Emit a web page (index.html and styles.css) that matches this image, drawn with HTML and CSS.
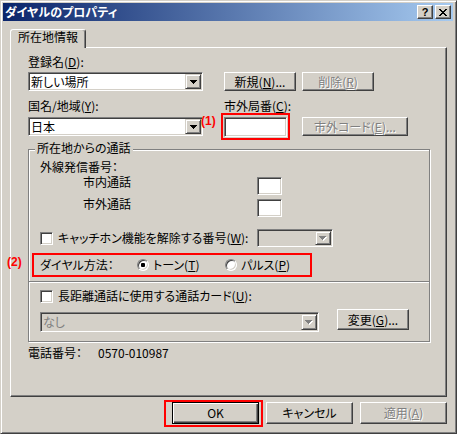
FILE: index.html
```html
<!DOCTYPE html>
<html lang="ja">
<head>
<meta charset="utf-8">
<title>ダイヤルのプロパティ</title>
<link rel="stylesheet" href="styles.css">
</head>
<body>
<div class="window">
  <div class="titlebar">
    <span class="title">ダイヤルのプロパティ</span>
    <span class="cap-btn help">?</span>
    <span class="cap-btn close"><svg width="8" height="7" viewBox="0 0 8 7" shape-rendering="crispEdges"><path d="M0 0h2v1h-2z M6 0h2v1h-2z M1 1h2v1h-2z M5 1h2v1h-2z M2 2h4v1h-4z M3 3h2v1h-2z M2 4h4v1h-4z M1 5h2v1h-2z M5 5h2v1h-2z M0 6h2v1h-2z M6 6h2v1h-2z" fill="#000"/></svg></span>
  </div>
  <div class="body">
    <div class="tabs"><div class="tab">所在地情報</div></div>
    <div class="panel">
      <div class="lbl">登録名(<u>D</u>):</div>
      <div class="row r1">
        <div class="combo w175"><span class="combo-text">新しい場所</span><span class="dd"><svg width="7" height="4" viewBox="0 0 7 4" shape-rendering="crispEdges"><path d="M0 0h7v1h-1v1h-1v1h-1v1h-1v-1h-1v-1h-1v-1h-1z" fill="#000"/></svg></span></div>
        <div class="btn w72 ml21">新規(<u>N</u>)...</div>
        <div class="btn w72 ml6 disabled">削除(<u>R</u>)</div>
      </div>
      <div class="row labels2">
        <div class="lbl w196">国名/地域(<u>Y</u>):</div>
        <div class="lbl">市外局番(<u>C</u>):</div>
      </div>
      <div class="row r2">
        <div class="combo w175"><span class="combo-text">日本</span><span class="dd"><svg width="7" height="4" viewBox="0 0 7 4" shape-rendering="crispEdges"><path d="M0 0h7v1h-1v1h-1v1h-1v1h-1v-1h-1v-1h-1v-1h-1z" fill="#000"/></svg></span></div>
        <div class="area-wrap"><span class="note n1">(1)</span><div class="edit area"></div></div>
        <div class="btn w106 ml15 disabled">市外コード(<u>E</u>)...</div>
      </div>
      <div class="group">
        <div class="group-title">所在地からの通話</div>
        <div class="group-sec sec1">
          <div class="lbl">外線発信番号：</div>
          <div class="row num-row first"><div class="num-lbl">市内通話</div><div class="edit small"></div></div>
          <div class="row num-row"><div class="num-lbl">市外通話</div><div class="edit small"></div></div>
          <div class="row chk-row">
            <span class="check"></span>
            <span class="chk-text">キャッチホン機能を解除する番号(<u>W</u>):</span>
            <div class="combo dis w76"><span class="combo-text"></span><span class="dd"><svg width="8" height="5" viewBox="0 0 8 5" shape-rendering="crispEdges"><path d="M1 1h7v1h-1v1h-1v1h-1v1h-1v-1h-1v-1h-1v-1h-1z" fill="#fff"/><path d="M0 0h7v1h-1v1h-1v1h-1v1h-1v-1h-1v-1h-1v-1h-1z" fill="#808080"/></svg></span></div>
          </div>
          <div class="dial-row">
            <span class="note n2">(2)</span>
            <span class="dial-lbl">ダイヤル方法：</span>
            <span class="radio-item w88"><span class="radio checked"></span>トーン(<u>T</u>)</span>
            <span class="radio-item"><span class="radio"></span>パルス(<u>P</u>)</span>
          </div>
        </div>
        <div class="sep"></div>
        <div class="group-sec sec2">
          <div class="row chk-row2">
            <span class="check"></span>
            <span class="chk-text2">長距離通話に使用する通話カード(<u>U</u>):</span>
          </div>
          <div class="row card-row">
            <div class="combo dis w279"><span class="combo-text">なし</span><span class="dd"><svg width="8" height="5" viewBox="0 0 8 5" shape-rendering="crispEdges"><path d="M1 1h7v1h-1v1h-1v1h-1v1h-1v-1h-1v-1h-1v-1h-1z" fill="#fff"/><path d="M0 0h7v1h-1v1h-1v1h-1v1h-1v-1h-1v-1h-1v-1h-1z" fill="#808080"/></svg></span></div>
            <div class="btn w72 ml18 h21">変更(<u>G</u>)...</div>
          </div>
        </div>
      </div>
      <div class="phone"><span class="phone-lbl">電話番号：</span><span>0570-010987</span></div>
    </div>
    <div class="dialog-buttons">
      <div class="btn dlg default ok">OK</div>
      <div class="btn dlg">キャンセル</div>
      <div class="btn dlg disabled">適用(<u>A</u>)</div>
    </div>
  </div>
</div>
</body>
</html>
```

FILE: styles.css
```css
* { box-sizing: border-box; }
html, body { margin: 0; padding: 0; }
body {
  width: 457px;
  height: 434px;
  overflow: hidden;
  background: #d4d0c8;
  font-family: "Noto Sans CJK JP", "Noto Sans", sans-serif;
  font-size: 12px;
  line-height: 14px;
  color: #000;
  font-feature-settings: "palt";
}
u { text-decoration: underline; text-underline-offset: 1px; }

.window {
  width: 457px;
  height: 434px;
  background: #d4d0c8;
  border: 1px solid;
  border-color: #d4d0c8 #404040 #404040 #d4d0c8;
  box-shadow: inset 1px 1px 0 #fff, inset -1px -1px 0 #808080;
  padding: 2px 3px 3px 2px;
  display: flex;
  flex-direction: column;
}

.titlebar {
  height: 18px;
  background: linear-gradient(to right, #0a246a, #a6caf0);
  display: flex;
  align-items: center;
  padding: 0 2px 0 2px;
}
.title {
  flex: 1;
  color: #fff;
  font-weight: 700;
  white-space: nowrap;
}
.cap-btn {
  width: 16px;
  height: 14px;
  background: #d4d0c8;
  border: 1px solid;
  border-color: #fff #404040 #404040 #fff;
  box-shadow: inset -1px -1px 0 #808080;
  display: flex;
  align-items: center;
  justify-content: center;
}
.cap-btn.help {
  margin-right: 2px;
  font-family: "Liberation Sans", sans-serif;
  font-weight: 700;
  font-size: 11px;
  line-height: 11px;
}

.body {
  padding: 8px 6px 0 7px;
  display: flex;
  flex-direction: column;
}
.tabs {
  display: flex;
  height: 19px;
  margin-bottom: -1px;
  position: relative;
  z-index: 1;
}
.tab {
  width: 76px;
  height: 19px;
  background: #d4d0c8;
  border: 1px solid;
  border-bottom: none;
  border-color: #fff #404040 transparent #fff;
  box-shadow: inset -1px 0 0 #808080;
  border-radius: 3px 3px 0 0;
  padding: 0 0 0 7px;
  white-space: nowrap;
}

.panel {
  height: 350px;
  border: 1px solid;
  border-color: #fff #404040 #404040 #fff;
  box-shadow: inset -1px -1px 0 #808080;
  padding: 7px 0 0 17px;
}

.lbl { white-space: nowrap; height: 14px; }
.row { display: flex; align-items: flex-start; }
.r1 { margin-top: 3px; }
.labels2 { margin-top: 8px; }
.r2 { margin-top: 4px; }

.w175 { width: 175px; }
.w196 { width: 196px; }
.w72 { width: 72px; }
.w76 { width: 76px; }
.w88 { width: 88px; }
.w106 { width: 106px; }
.w279 { width: 279px; }
.ml6 { margin-left: 6px; }
.ml15 { margin-left: 15px; }
.ml18 { margin-left: 18px; }
.ml21 { margin-left: 21px; }

.combo {
  height: 19px;
  display: flex;
  background: #fff;
  border: 1px solid;
  border-color: #808080 #fff #fff #808080;
  box-shadow: inset 1px 1px 0 #404040, inset -1px -1px 0 #d4d0c8;
  padding: 1px;
}
.combo.dis { background: #d4d0c8; color: #808080; height: 18px; }
.combo-text {
  flex: 1;
  padding-left: 1px;
  line-height: 15px;
  white-space: nowrap;
  overflow: hidden;
}
.dd {
  width: 16px;
  background: #d4d0c8;
  border: 1px solid;
  border-color: #d4d0c8 #404040 #404040 #d4d0c8;
  box-shadow: inset 1px 1px 0 #fff, inset -1px -1px 0 #808080;
  display: flex;
  align-items: center;
  justify-content: center;
}
.dd svg { display: block; }

.edit {
  background: #fff;
  border: 1px solid;
  border-color: #808080 #fff #fff #808080;
  box-shadow: inset 1px 1px 0 #404040, inset -1px -1px 0 #d4d0c8;
}

.btn {
  height: 19px;
  background: #d4d0c8;
  border: 1px solid;
  border-color: #fff #404040 #404040 #fff;
  box-shadow: inset -1px -1px 0 #808080;
  display: flex;
  align-items: center;
  justify-content: center;
  white-space: nowrap;
}
.btn.h21 { height: 21px; }
.disabled { color: #808080; text-shadow: 1px 1px 0 #fff; }

.area-wrap {
  position: relative;
  margin-left: 21px;
  width: 63px;
  height: 20px;
}
.edit.area { width: 63px; height: 20px; }
.area-wrap::after {
  content: "";
  position: absolute;
  left: -3px;
  right: -3px;
  top: -4px;
  bottom: -3px;
  border: 2px solid #f00;
}
.note {
  position: absolute;
  color: #f00;
  font-family: "Liberation Sans", "Noto Sans CJK JP", sans-serif;
  font-weight: 700;
  font-size: 12px;
  line-height: 12px;
  white-space: nowrap;
}
.n1 { left: -23px; top: -2px; }
.n2 { left: -27px; top: 1px; }

.group {
  position: relative;
  margin-top: 12px;
  width: 402px;
  height: 193px;
  border: 1px solid #808080;
  box-shadow: inset 1px 1px 0 #fff, 1px 1px 0 #fff;
}
.group-title {
  position: absolute;
  left: 6px;
  top: -9px;
  padding: 0 2px;
  background: #d4d0c8;
  white-space: nowrap;
}
.group-sec { padding-left: 11px; }
.sec1 { padding-top: 10px; }
.sec2 { padding-top: 6px; }

.num-row { height: 18px; margin-top: 4px; }
.num-row.first { margin-top: 3px; }
.num-lbl { margin-left: 43px; width: 174px; margin-top: -2px; }
.edit.small { width: 25px; height: 18px; }

.check {
  width: 13px;
  height: 13px;
  flex: none;
  background: #fff;
  border: 1px solid;
  border-color: #808080 #fff #fff #808080;
  box-shadow: inset 1px 1px 0 #404040, inset -1px -1px 0 #d4d0c8;
}
.chk-row { margin-top: 12px; height: 18px; align-items: center; }
.chk-text { margin-left: 5px; width: 199px; white-space: nowrap; }
.chk-row2 { height: 14px; align-items: center; }
.chk-text2 { margin-left: 5px; white-space: nowrap; }

.dial-row {
  position: relative;
  display: flex;
  align-items: center;
  margin-top: 6px;
  margin-left: -8px;
  width: 280px;
  height: 24px;
  border: 2px solid #f00;
  padding-left: 6px;
}
.dial-lbl { width: 97px; white-space: nowrap; }
.radio-item { display: flex; align-items: center; white-space: nowrap; }
.radio {
  position: relative;
  width: 12px;
  height: 12px;
  margin-right: 4px;
  border-radius: 50%;
  background: #fff;
  border: 1px solid;
  border-color: #808080 #fff #fff #808080;
  box-shadow: inset 1px 1px 0 #404040, inset -1px -1px 0 #d4d0c8;
}
.radio.checked::after {
  content: "";
  position: absolute;
  left: 3px;
  top: 3px;
  width: 4px;
  height: 4px;
  border-radius: 1px;
  background: #000;
}

.sep {
  margin-top: 4px;
  height: 2px;
  border-top: 1px solid #808080;
  border-bottom: 1px solid #fff;
}

.card-row { margin-top: 6px; }
.card-row .combo { margin-top: 3px; height: 20px; }

.phone { margin-top: 4px; display: flex; white-space: nowrap; }
.phone-lbl { width: 70px; }

.dialog-buttons {
  display: flex;
  justify-content: flex-end;
  gap: 7px;
  margin-top: 5px;
}
.btn.dlg { width: 87px; height: 22px; }
.btn.default {
  position: relative;
  border: 1px solid #000;
  box-shadow: inset 1px 1px 0 #fff, inset -1px -1px 0 #404040, inset -2px -2px 0 #808080;
}
.btn.ok::after {
  content: "";
  position: absolute;
  left: -9px;
  right: -5px;
  top: -3px;
  bottom: -4px;
  border: 2px solid #f00;
}
```
